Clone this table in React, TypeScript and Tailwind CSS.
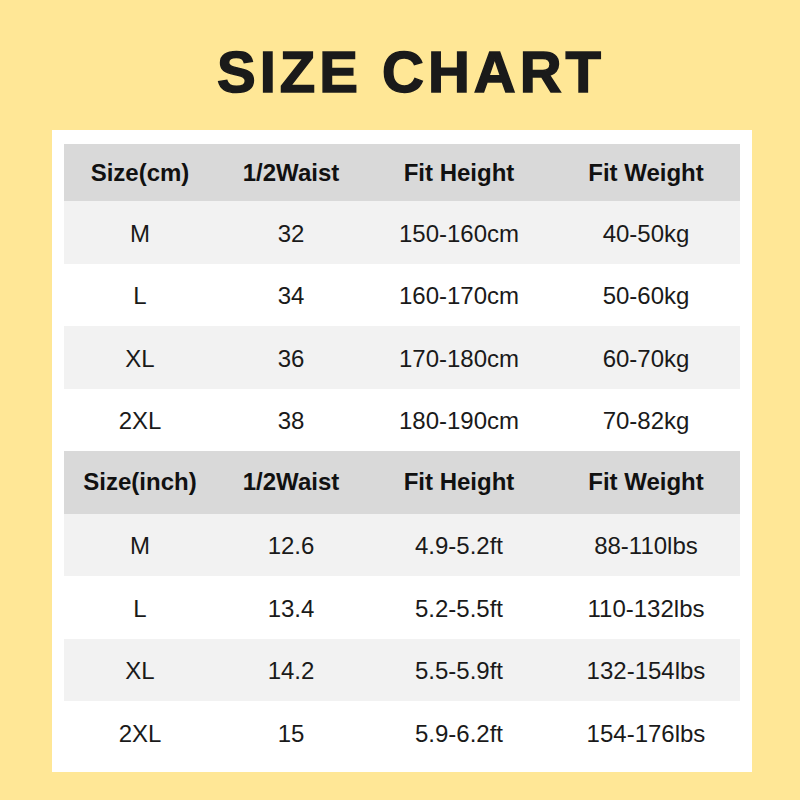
const cmRows = [
  ['M', '32', '150-160cm', '40-50kg'],
  ['L', '34', '160-170cm', '50-60kg'],
  ['XL', '36', '170-180cm', '60-70kg'],
  ['2XL', '38', '180-190cm', '70-82kg'],
];

const inchRows = [
  ['M', '12.6', '4.9-5.2ft', '88-110lbs'],
  ['L', '13.4', '5.2-5.5ft', '110-132lbs'],
  ['XL', '14.2', '5.5-5.9ft', '132-154lbs'],
  ['2XL', '15', '5.9-6.2ft', '154-176lbs'],
];

const cols = 'grid grid-cols-[152px_150px_186px_188px] items-center';

const HeaderRow = ({ first, height }: { first: string; height: string }) => (
  <div className={`${cols} ${height} bg-[#d9d9d9] font-bold text-[#111]`}>
    <div className="text-center">{first}</div>
    <div className="text-center">1/2Waist</div>
    <div className="text-center">Fit Height</div>
    <div className="text-center">Fit Weight</div>
  </div>
);

const DataRows = ({ rows }: { rows: string[][] }) => (
  <>
    {rows.map((row, i) => (
      <div
        key={row[0]}
        className={`${cols} h-[62.5px] text-[#1a1a1a] ${i % 2 === 0 ? 'bg-[#f2f2f2]' : 'bg-white'}`}
      >
        {row.map((cell, j) => (
          <div key={j} className="text-center pt-[3px]">
            {cell}
          </div>
        ))}
      </div>
    ))}
  </>
);

export default function App() {
  return (
    <div className="w-[800px] h-[800px] bg-[#ffe796] flex flex-col items-center font-['Liberation_Sans',Arial,sans-serif]">
      <h1 className="pt-[43px] ml-[22px] text-[58px] leading-none font-bold tracking-[4px] text-[#1a1a1a] [-webkit-text-stroke:1.5px_#1a1a1a]">
        SIZE CHART
      </h1>
      <div className="mt-[29px] ml-[4px] w-[700px] h-[642px] bg-white px-3 pt-[14px] text-[24px]">
        <HeaderRow first="Size(cm)" height="h-[57px]" />
        <DataRows rows={cmRows} />
        <HeaderRow first="Size(inch)" height="h-[62.5px]" />
        <DataRows rows={inchRows} />
      </div>
    </div>
  );
}
